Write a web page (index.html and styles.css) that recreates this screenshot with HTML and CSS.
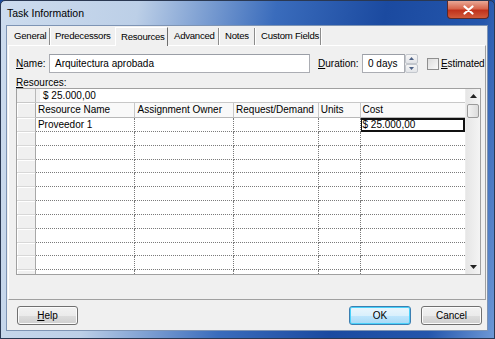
FILE: index.html
```html
<!DOCTYPE html>
<html lang="en">
<head>
    <meta charset="UTF-8">
    <title>Task Information</title>
    <link rel="stylesheet" href="styles.css">
</head>
<body>

    <div class="window">
        <div class="titlebar">
            <span class="title">Task Information</span>
            <div class="close-btn">
                <svg width="11" height="10" viewBox="0 0 11 10"><path d="M1.5 1.5 L9.5 8.5 M9.5 1.5 L1.5 8.5" stroke="#fff" stroke-width="2.2" stroke-linecap="round"/></svg>
            </div>
        </div>

        <div class="client">
            <div class="tabs">
                <div class="tab t-general">General</div>
                <div class="tab t-pred">Predecessors</div>
                <div class="tab t-res active">Resources</div>
                <div class="tab t-adv">Advanced</div>
                <div class="tab t-notes">Notes</div>
                <div class="tab t-custom">Custom Fields</div>
            </div>

            <div class="panel">
                <div class="name-row">
                    <label class="name-label"><u>N</u>ame:</label>
                    <div class="textbox name-box">Arquitectura aprobada</div>
                    <label class="dur-label"><u>D</u>uration:</label>
                    <div class="textbox dur-box">0 days</div>
                    <div class="spin">
                        <div class="spin-btn"><svg width="5" height="3" viewBox="0 0 5 3"><path d="M0 3 L2.5 0 L5 3Z" fill="#4d6185"/></svg></div>
                        <div class="spin-btn"><svg width="5" height="3" viewBox="0 0 5 3"><path d="M0 0 L2.5 3 L5 0Z" fill="#4d6185"/></svg></div>
                    </div>
                    <div class="checkbox"></div>
                    <label class="check-label"><u>E</u>stimated</label>
                </div>

                <div class="res-label"><u>R</u>esources:</div>

                <div class="grid">
                    <div class="grid-body">
                        <div class="entry-row">
                            <div class="corner"></div>
                            <div class="entry">$ 25.000,00</div>
                        </div>
                        <div class="row head">
                            <div class="cell rh"></div>
                            <div class="cell c1">Resource Name</div>
                            <div class="cell c2">Assignment Owner</div>
                            <div class="cell c3">Request/Demand</div>
                            <div class="cell c4">Units</div>
                            <div class="cell c5">Cost</div>
                        </div>
                        <div class="row">
                            <div class="cell rh"></div>
                            <div class="cell c1">Proveedor 1</div>
                            <div class="cell c2"></div>
                            <div class="cell c3"></div>
                            <div class="cell c4"></div>
                            <div class="cell c5 selected">$ 25.000,00</div>
                        </div>
                        <div class="row"><div class="cell rh"></div><div class="cell c1"></div><div class="cell c2"></div><div class="cell c3"></div><div class="cell c4"></div><div class="cell c5"></div></div>
                        <div class="row"><div class="cell rh"></div><div class="cell c1"></div><div class="cell c2"></div><div class="cell c3"></div><div class="cell c4"></div><div class="cell c5"></div></div>
                        <div class="row"><div class="cell rh"></div><div class="cell c1"></div><div class="cell c2"></div><div class="cell c3"></div><div class="cell c4"></div><div class="cell c5"></div></div>
                        <div class="row"><div class="cell rh"></div><div class="cell c1"></div><div class="cell c2"></div><div class="cell c3"></div><div class="cell c4"></div><div class="cell c5"></div></div>
                        <div class="row"><div class="cell rh"></div><div class="cell c1"></div><div class="cell c2"></div><div class="cell c3"></div><div class="cell c4"></div><div class="cell c5"></div></div>
                        <div class="row"><div class="cell rh"></div><div class="cell c1"></div><div class="cell c2"></div><div class="cell c3"></div><div class="cell c4"></div><div class="cell c5"></div></div>
                        <div class="row"><div class="cell rh"></div><div class="cell c1"></div><div class="cell c2"></div><div class="cell c3"></div><div class="cell c4"></div><div class="cell c5"></div></div>
                        <div class="row"><div class="cell rh"></div><div class="cell c1"></div><div class="cell c2"></div><div class="cell c3"></div><div class="cell c4"></div><div class="cell c5"></div></div>
                        <div class="row"><div class="cell rh"></div><div class="cell c1"></div><div class="cell c2"></div><div class="cell c3"></div><div class="cell c4"></div><div class="cell c5"></div></div>
                        <div class="row"><div class="cell rh"></div><div class="cell c1"></div><div class="cell c2"></div><div class="cell c3"></div><div class="cell c4"></div><div class="cell c5"></div></div>
                        <div class="row"><div class="cell rh"></div><div class="cell c1"></div><div class="cell c2"></div><div class="cell c3"></div><div class="cell c4"></div><div class="cell c5"></div></div>
                    </div>
                    <div class="vscroll">
                        <div class="arrow"><svg width="7" height="4" viewBox="0 0 7 4"><path d="M0 4 L3.5 0 L7 4Z" fill="#222"/></svg></div>
                        <div class="thumb"></div>
                        <div class="track"></div>
                        <div class="arrow"><svg width="7" height="4" viewBox="0 0 7 4"><path d="M0 0 L3.5 4 L7 0Z" fill="#222"/></svg></div>
                    </div>
                </div>
            </div>

            <div class="buttons">
                <button class="btn"><u>H</u>elp</button>
                <div class="spacer"></div>
                <button class="btn default">OK</button>
                <button class="btn">Cancel</button>
            </div>
        </div>
    </div>

</body>
</html>
```

FILE: styles.css
```css
body {
    margin: 0;
    font-family: "Liberation Sans", Arial, sans-serif;
    font-size: 10px;
    color: #000;
    background: #1d4c9c;
}
.window {
    width: 495px;
    height: 339px;
    box-sizing: border-box;
    border: 1px solid #2a3852;
    border-radius: 5px 5px 0 0;
    display: flex;
    flex-direction: column;
    background: linear-gradient(100deg, #cddcee 0%, #bccfe7 25%, #3a6cbc 50%, #1b4aa0 70%, #2456ac 88%, #6d98d6 100%);
}
.titlebar {
    height: 24px;
    display: flex;
    align-items: flex-start;
    justify-content: space-between;
    padding-left: 6px;
}
.title {
    font-size: 10.5px;
    line-height: 25px;
    color: #000;
}
.close-btn {
    width: 40px;
    height: 17px;
    margin-right: 5px;
    border: 1px solid #5a2a2a;
    border-top: none;
    border-radius: 0 0 4px 4px;
    background: linear-gradient(#e9a896 0%, #d7664d 45%, #c0321c 55%, #d25a3a 100%);
    display: flex;
    align-items: center;
    justify-content: center;
}
.client {
    flex: 1;
    margin: 0 6px 7px 5px;
    border: 1px solid #7e94b4;
    background: #f0f0f0;
    padding: 0 1px 0 1px;
    display: flex;
    flex-direction: column;
}
.tabs {
    display: flex;
    height: 19px;
    margin-left: 2px;
    align-items: flex-end;
}
.tab {
    height: 17px;
    line-height: 16px;
    box-sizing: border-box;
    padding-left: 4px;
    border-right: 1px solid #8c8c8c;
    box-shadow: 1px 0 0 #fff;
    margin-right: 1px;
    font-size: 9.6px;
    letter-spacing: -0.25px;
    white-space: nowrap;
    flex-shrink: 0;
}
.t-general { width: 40px; }
.t-pred { width: 64px; border-right: none; box-shadow: none; margin-right: 0; }
.t-adv { width: 50px; padding-left: 5px; }
.t-notes { width: 35px; padding-left: 5px; }
.t-custom { width: 65px; padding-left: 5px; }
.tab.active {
    width: 53px;
    height: 19px;
    line-height: 17px;
    padding-left: 5px;
    background: #f0f0f0;
    border: 1px solid #fff;
    border-bottom: none;
    border-right: 1px solid #6e6e6e;
    box-shadow: none;
    margin-left: 0;
    margin-bottom: -1px;
    position: relative;
    z-index: 1;
}
.panel {
    height: 255px;
    box-sizing: border-box;
    border: 1px solid #fff;
    border-right-color: #a0a0a0;
    border-bottom-color: #a0a0a0;
    padding: 8px 4px 0 7px;
}
.name-row {
    display: flex;
    align-items: center;
    height: 19px;
}
.name-row > * {
    flex-shrink: 0;
}
.name-label {
    width: 33px;
}
.textbox {
    height: 19px;
    box-sizing: border-box;
    border: 1px solid #abadb3;
    border-top-color: #9a9ea6;
    background: #fff;
    padding-left: 5px;
    line-height: 17px;
}
.name-box {
    width: 261px;
}
.dur-label {
    width: 44px;
    margin-left: 8px;
}
.dur-box {
    width: 43px;
}
.spin {
    width: 13px;
    height: 19px;
    display: flex;
    flex-direction: column;
}
.spin-btn {
    flex: 1;
    border: 1px solid #c3c7cd;
    border-radius: 2px;
    background: linear-gradient(#f6f6f6, #e2e4e8);
    display: flex;
    align-items: center;
    justify-content: center;
}
.checkbox {
    width: 12px;
    height: 12px;
    box-sizing: border-box;
    border: 1px solid #8f8f8f;
    background: linear-gradient(135deg, #dcdcdc, #fafafa);
    margin-left: 9px;
}
.check-label {
    margin-left: 2px;
    letter-spacing: -0.1px;
}
.res-label {
    margin-top: 3px;
    height: 12px;
    line-height: 13px;
}
.grid {
    height: 187px;
    box-sizing: border-box;
    border: 1px solid #a0a0a0;
    display: flex;
    background: #fff;
}
.grid-body {
    width: 450px;
    overflow: hidden;
}
.entry-row {
    display: flex;
    height: 14px;
    box-sizing: border-box;
    border-bottom: 1px solid #c8c8c8;
    background: #f0f0f0;
}
.corner {
    width: 19px;
    box-sizing: border-box;
    border-right: 1px solid #b8b8b8;
}
.entry {
    flex: 1;
    margin-left: 4px;
    background: #fff;
    padding-left: 3px;
    line-height: 13px;
}
.row {
    display: flex;
    height: 13.85px;
}
.row.head {
    height: 15px;
}
.cell {
    box-sizing: border-box;
    border-right: 1px dotted #7a7a7a;
    border-bottom: 1px dotted #7a7a7a;
    padding-left: 2px;
    line-height: 13px;
    white-space: nowrap;
    overflow: hidden;
}
.head .cell {
    background: #f9f9f9;
    border-right: 1px solid #c8c8c8;
    border-bottom: 1px solid #b8b8b8;
    line-height: 14px;
}
.cell.rh,
.head .cell.rh {
    width: 19px;
    background: #f0f0f0;
    border-right: 1px solid #a8a8a8;
    border-bottom: 1px solid #d8d8d8;
    box-shadow: inset 1px 1px 0 #fff;
}
.c1 { width: 100px; }
.c2 { width: 99px; }
.c3 { width: 85px; }
.c4 { width: 42px; }
.c5 { width: 105px; border-right: none; }
.head .c5 { border-right: none; }
.cell.selected {
    border: 2px solid #111;
    border-left-width: 1px;
    padding-left: 1px;
    line-height: 10px;
}
.vscroll {
    width: 14px;
    display: flex;
    flex-direction: column;
    background: linear-gradient(90deg, #e6e6e6, #f4f4f4);
    border-left: 1px solid #ececec;
}
.arrow {
    height: 14px;
    display: flex;
    align-items: center;
    justify-content: center;
}
.thumb {
    height: 14px;
    margin: 1px 1px 0 1px;
    box-sizing: border-box;
    border: 1px solid #9a9a9a;
    border-radius: 2px;
    background: linear-gradient(90deg, #f3f3f3, #dcdcdc);
}
.track {
    flex: 1;
}
.buttons {
    display: flex;
    margin-top: 6px;
    padding: 0 4px 0 9px;
}
.spacer {
    flex: 1;
}
.btn {
    width: 61px;
    height: 19px;
    font-family: "Liberation Sans", Arial, sans-serif;
    font-size: 10px;
    color: #000;
    border: 1px solid #707070;
    border-radius: 3px;
    background: linear-gradient(#f2f2f2 0%, #ebebeb 50%, #dddddd 51%, #cfcfcf 100%);
    box-shadow: inset 0 0 0 1px #fbfbfb;
    padding: 0;
    margin-left: 10px;
}
.btn:first-child {
    margin-left: 0;
}
.btn.default {
    width: 62px;
    border-color: #3c7fb1;
    background: linear-gradient(#eaf6fd 0%, #d9f0fc 50%, #bee6fd 51%, #a7d9f5 100%);
    box-shadow: inset 0 0 0 1px #48d1fa;
}
```
